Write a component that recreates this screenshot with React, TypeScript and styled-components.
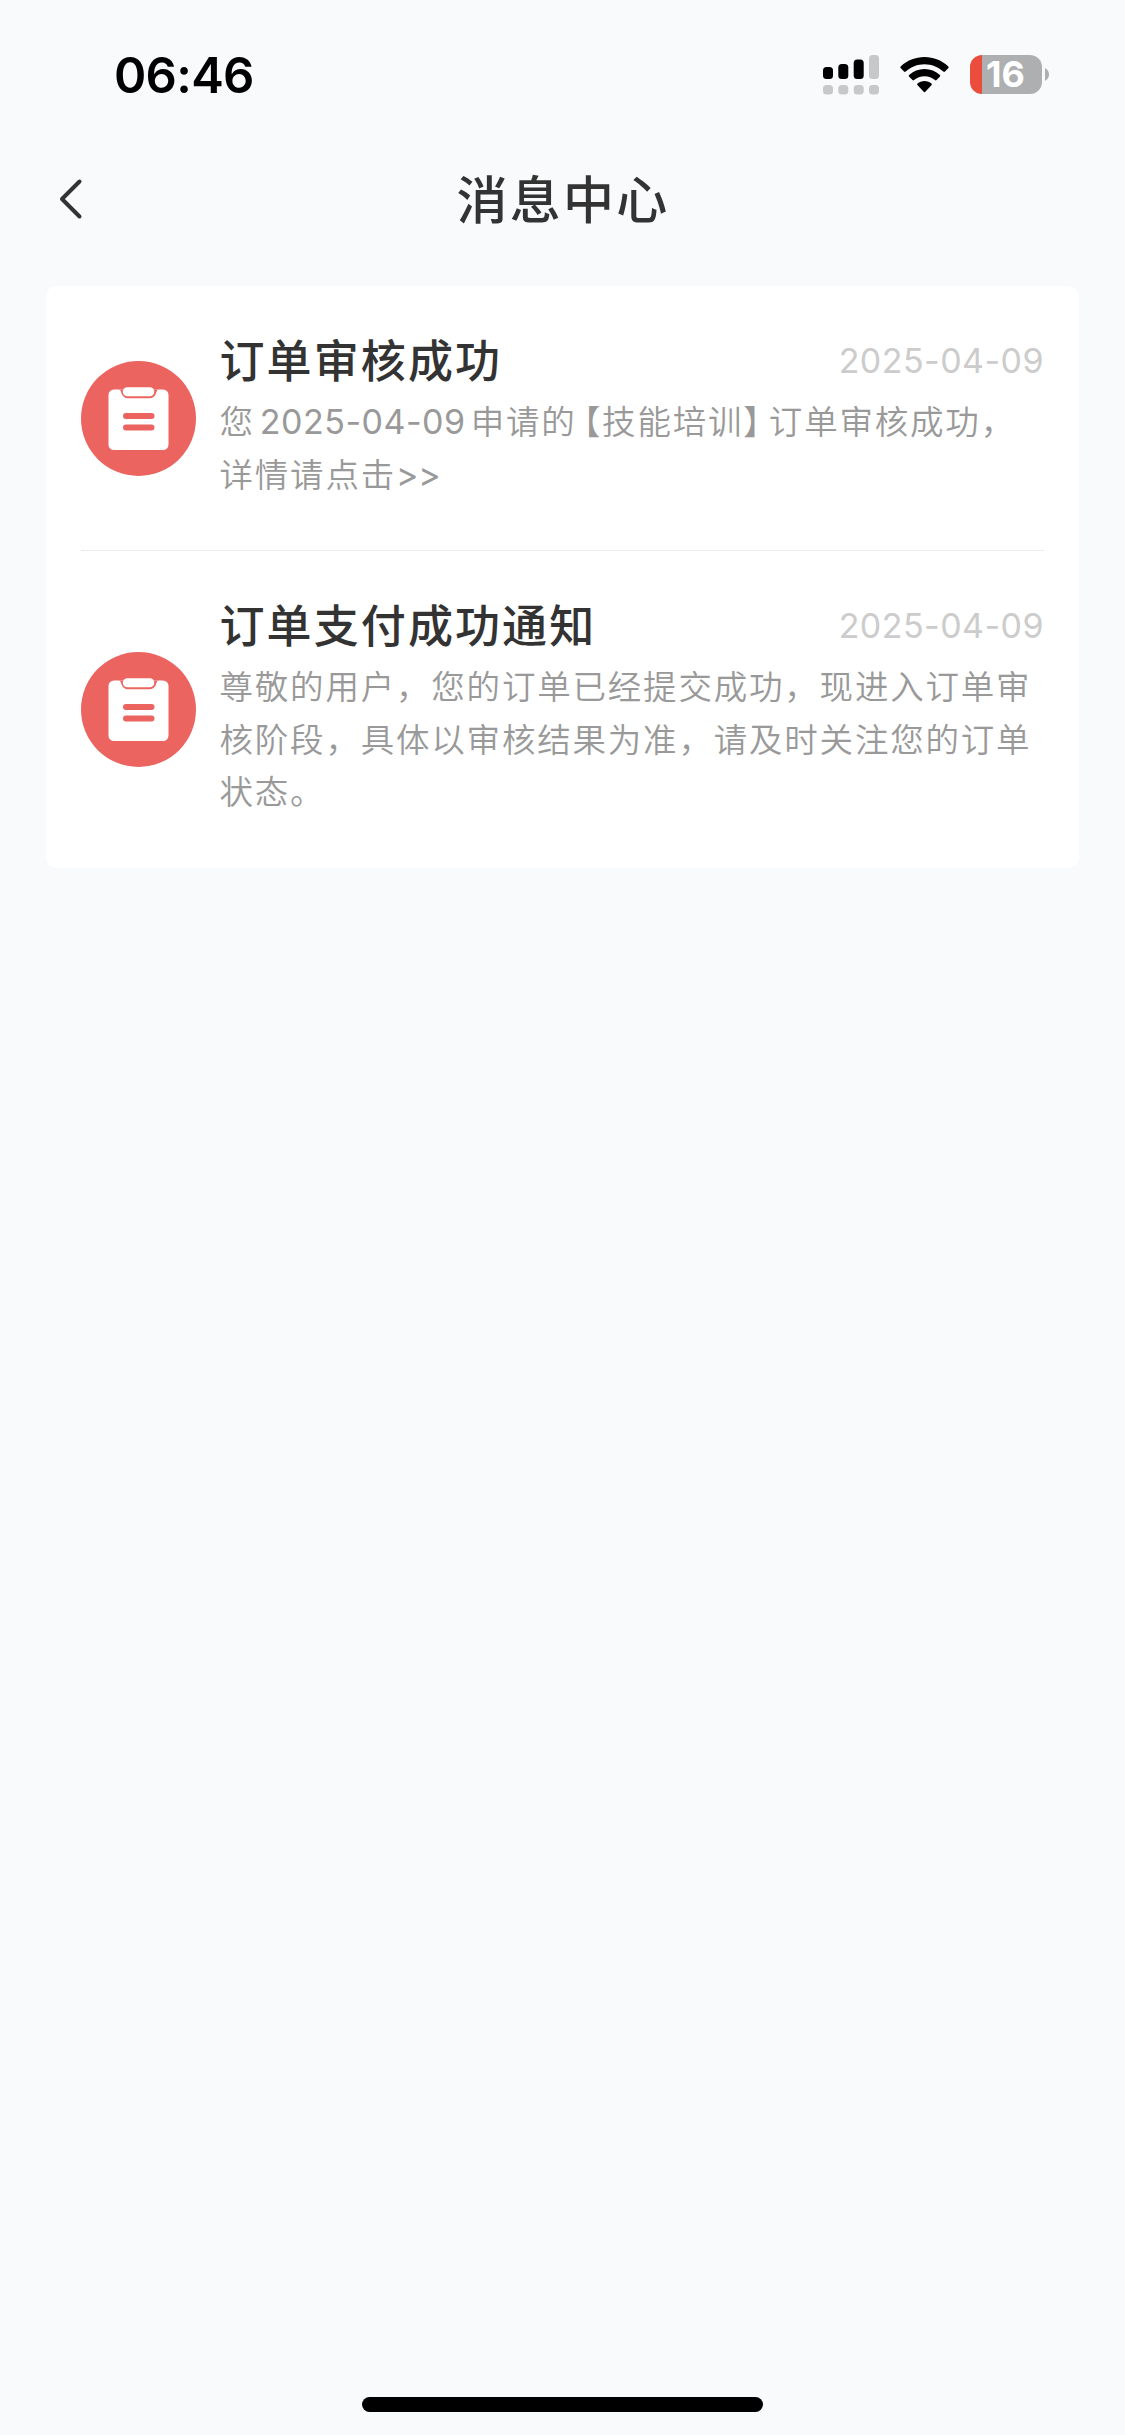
import React from "react";
import styled, { createGlobalStyle } from "styled-components";

const GlobalStyle = createGlobalStyle`
  * { box-sizing: border-box; }
  body {
    margin: 0;
    background: #f9fafc;
    font-family: Inter, "Noto Sans CJK SC", sans-serif;
  }
`;

const Screen = styled.div`
  display: flex;
  flex-direction: column;
  width: 1125px;
  height: 2435px;
  background: #f9fafc;
`;

const StatusBar = styled.header`
  display: flex;
  align-items: center;
  justify-content: space-between;
  height: 149px;
  padding: 0 76px 0 114px;
`;

const Clock = styled.time`
  padding-top: 2px;
  font-size: 49px;
  font-weight: 600;
  line-height: 60px;
  letter-spacing: -0.7px;
  color: #000;
`;

const StatusIcons = styled.div`
  display: flex;
  align-items: center;
  gap: 21px;
`;

const Battery = styled.div`
  display: flex;
  align-items: center;
  gap: 3px;
`;

const BatteryBody = styled.div<{ $level: number }>`
  display: flex;
  align-items: center;
  justify-content: center;
  width: 72px;
  height: 39px;
  padding-right: 1px;
  border-radius: 12px;
  background: linear-gradient(
    to right,
    #eb4d3d ${(p) => p.$level}%,
    #aeafb0 ${(p) => p.$level}%
  );
  color: #fff;
  font-size: 36px;
  font-weight: 700;
  line-height: 39px;
`;

const NavBar = styled.nav`
  display: grid;
  grid-template-columns: 120px 1fr 120px;
  align-items: center;
  height: 100px;
`;

const BackButton = styled.button`
  display: flex;
  align-items: center;
  height: 100px;
  padding: 0 0 0 58px;
  border: 0;
  background: none;
`;

const PageTitle = styled.h1`
  margin: 0;
  padding: 3px 0 0 1px;
  text-align: center;
  font-size: 51px;
  font-weight: 500;
  line-height: 76px;
  letter-spacing: 2.2px;
  color: #333;
`;

const MessageList = styled.main`
  margin: 37px 46px 0;
  padding: 0 35px;
  border-radius: 10px;
  background: #fff;
`;

const MessageRow = styled.article`
  display: flex;
  align-items: center;
  gap: 23.5px;
  padding: 42px 0 51px;

  & + & {
    border-top: 1px solid #ebebeb;
  }
`;

const IconSlot = styled.div`
  flex: none;
  width: 115px;
  height: 115px;
  margin-top: 9px;
`;

const MessageBody = styled.div`
  flex: 1;
  min-width: 0;
`;

const MessageHead = styled.div`
  display: flex;
  align-items: center;
  justify-content: space-between;
  height: 66px;
`;

const MessageTitle = styled.h2`
  margin: 0;
  padding-top: 2px;
  font-size: 45px;
  font-weight: 500;
  line-height: 64px;
  letter-spacing: 2.1px;
  color: #333;
`;

const MessageDate = styled.time`
  font-size: 34px;
  font-weight: 400;
  line-height: 50px;
  letter-spacing: 0.45px;
  color: #ccc;
`;

const MessageText = styled.p`
  margin: 0;
  font-size: 33.5px;
  line-height: 52.5px;
  letter-spacing: 1.8px;
  color: #999;
  font-family: "Noto Sans CJK SC", sans-serif;
  font-weight: 350;
`;

const Latin = styled.span<{ $gap?: number; $tracking?: number }>`
  margin: 0 ${(p) => p.$gap ?? 0}px;
  font-family: Inter, sans-serif;
  font-size: 34px;
  font-weight: 400;
  line-height: 0;
  letter-spacing: ${(p) => p.$tracking ?? 0}px;
`;

const OpenBracket = styled.span`
  margin-left: 7px;
  font-feature-settings: "halt";
`;

const CloseBracket = styled.span`
  margin-right: 7px;
  font-feature-settings: "halt";
`;

const HomeArea = styled.footer`
  display: flex;
  justify-content: center;
  margin-top: auto;
  padding-bottom: 23px;
`;

const HomeIndicator = styled.div`
  width: 401px;
  height: 15px;
  border-radius: 8px;
  background: #000;
`;

const SignalIcon = () => (
  <svg width="56" height="40" viewBox="0 0 56 40">
    <g fill="#000">
      <rect x="0" y="12" width="10" height="12" rx="3.5" />
      <rect x="15.3" y="9" width="10" height="15" rx="3.5" />
      <rect x="30.7" y="4.5" width="10" height="19.5" rx="3.5" />
    </g>
    <g fill="#c7c8ca">
      <rect x="46" y="0" width="10" height="24" rx="3.5" />
      <rect x="0" y="30" width="10" height="9.5" rx="3.5" />
      <rect x="15.3" y="30" width="10" height="9.5" rx="3.5" />
      <rect x="30.7" y="30" width="10" height="9.5" rx="3.5" />
      <rect x="46" y="30" width="10" height="9.5" rx="3.5" />
    </g>
  </svg>
);

const WifiIcon = () => (
  <svg width="49" height="36" viewBox="0 0 49 36">
    <path d="M24.5 0C15.4 0 7 3.500 .7 9.500C.2 10 .2 10.600 .6 11.100L4 14.600C4.500 15.100 5.200 15.100 5.700 14.600C10.800 9.900 17.400 7.200 24.500 7.200S38.200 9.900 43.300 14.600C43.800 15.100 44.500 15.100 45 14.600L48.400 11.100C48.800 10.600 48.800 10 48.300 9.500C42 3.500 33.600 0 24.500 0Z" />
    <path d="M24.500 12C18.600 12 13.200 14.200 9.100 17.900C8.600 18.400 8.600 19 9 19.500L12.500 23C13 23.500 13.600 23.500 14.100 23.100C16.900 20.600 20.500 19.200 24.500 19.200S32.100 20.600 34.900 23.100C35.400 23.500 36 23.500 36.500 23L40 19.500C40.400 19 40.400 18.400 39.900 17.900C35.800 14.200 30.400 12 24.500 12Z" />
    <path d="M24.500 24C21.800 24 19.400 24.900 17.500 26.500C17 27 17 27.600 17.400 28.100L23.700 34.800C24.200 35.300 24.800 35.300 25.300 34.800L31.600 28.100C32 27.600 32 27 31.500 26.500C29.600 24.900 27.200 24 24.500 24Z" />
  </svg>
);

const BatteryCap = () => (
  <svg width="4" height="13" viewBox="0 0 4 13">
    <path d="M0 0C2.500 1.200 4 3.700 4 6.500S2.500 11.800 0 13Z" fill="#aeafb0" />
  </svg>
);

const BackIcon = () => (
  <svg width="26" height="42" viewBox="0 0 26 42" fill="none">
    <path
      d="M21.500 3.500L4 21L21.500 38.500"
      stroke="#333"
      strokeWidth="4"
      strokeLinecap="round"
      strokeLinejoin="round"
    />
  </svg>
);

const OrderIcon = () => (
  <svg width="115" height="115" viewBox="0 0 115 115">
    <circle cx="57.500" cy="57.500" r="57.500" fill="#eb6460" />
    <rect x="27.500" y="28.500" width="60" height="60.500" rx="5.500" fill="#fff" />
    <path
      d="M37.500 28.500C39.500 28.500 39.700 30 40.500 32.500C41.600 35.600 44 37.200 47 37.200H68.500C71.500 37.200 73.900 35.600 75 32.500C75.800 30 76 28.500 78 28.500Z"
      fill="#eb6460"
    />
    <rect x="41.800" y="26.300" width="31.500" height="9" rx="4.500" fill="#fff" />
    <rect x="42" y="52" width="31.500" height="6" rx="3" fill="#eb6460" />
    <rect x="42" y="63.500" width="31.500" height="6" rx="3" fill="#eb6460" />
  </svg>
);

interface Message {
  title: string;
  date: string;
  content: React.ReactNode;
}

const messages: Message[] = [
  {
    title: "订单审核成功",
    date: "2025-04-09",
    content: (
      <>
        您
        <Latin $gap={5} $tracking={0.5}>
          2025-04-09
        </Latin>
        申请的<OpenBracket>【</OpenBracket>
        技能培训<CloseBracket>】</CloseBracket>订单审核成功，详情请点击
        <Latin $tracking={-0.3}>&gt;&gt;</Latin>
      </>
    ),
  },
  {
    title: "订单支付成功通知",
    date: "2025-04-09",
    content:
      "尊敬的用户，您的订单已经提交成功，现进入订单审核阶段，具体以审核结果为准，请及时关注您的订单状态。",
  },
];

export default function App() {
  return (
    <Screen lang="zh-CN">
      <GlobalStyle />
      <StatusBar>
        <Clock>06:46</Clock>
        <StatusIcons>
          <SignalIcon />
          <WifiIcon />
          <Battery>
            <BatteryBody $level={16.5}>16</BatteryBody>
            <BatteryCap />
          </Battery>
        </StatusIcons>
      </StatusBar>
      <NavBar>
        <BackButton aria-label="返回">
          <BackIcon />
        </BackButton>
        <PageTitle>消息中心</PageTitle>
      </NavBar>
      <MessageList>
        {messages.map((m) => (
          <MessageRow key={m.title}>
            <IconSlot>
              <OrderIcon />
            </IconSlot>
            <MessageBody>
              <MessageHead>
                <MessageTitle>{m.title}</MessageTitle>
                <MessageDate>{m.date}</MessageDate>
              </MessageHead>
              <MessageText>{m.content}</MessageText>
            </MessageBody>
          </MessageRow>
        ))}
      </MessageList>
      <HomeArea>
        <HomeIndicator />
      </HomeArea>
    </Screen>
  );
}
